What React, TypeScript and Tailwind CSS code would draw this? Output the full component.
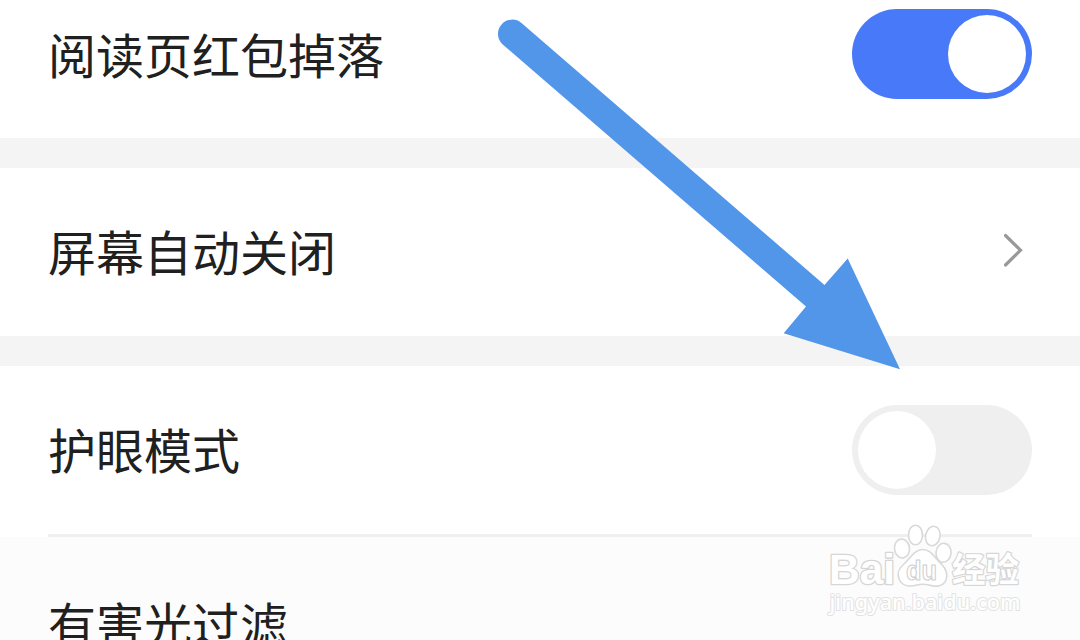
type Setting = {
  id: number;
  label: string;
  control: "on" | "off" | "link" | "none";
  className: string;
  labelClassName: string;
};

const settings: Setting[] = [
  {
    id: 1,
    label: "阅读页红包掉落",
    control: "on",
    className: "-mt-[30px] bg-white",
    labelClassName: "pb-0.5",
  },
  {
    id: 2,
    label: "屏幕自动关闭",
    control: "link",
    className: "border-t-[30px] border-[#f4f4f4] bg-white",
    labelClassName: "pb-1",
  },
  {
    id: 3,
    label: "护眼模式",
    control: "off",
    className: "border-t-[30px] border-[#f4f4f4] bg-white",
    labelClassName: "pb-1",
  },
  {
    id: 4,
    label: "有害光过滤",
    control: "none",
    className: "bg-[#fcfcfc]",
    labelClassName: "pt-0.5",
  },
];

function Toggle({ on }: { on: boolean }) {
  return (
    <div
      className={`flex h-[90px] w-[180px] items-center rounded-full px-1.5 ${
        on ? "justify-end bg-[#4879f8]" : "justify-start bg-[#efefef]"
      }`}
    >
      <div className="size-[78px] rounded-full bg-white" />
    </div>
  );
}

function Row({ setting }: { setting: Setting }) {
  return (
    <div className={`box-content flex h-[168px] shrink-0 items-center justify-between px-12 ${setting.className}`}>
      <span className={`text-5xl leading-[72px] text-[#202020] ${setting.labelClassName}`}>{setting.label}</span>
      {(setting.control === "on" || setting.control === "off") && <Toggle on={setting.control === "on"} />}
      {setting.control === "link" && (
        <svg className="mr-2 mb-1 h-9 w-5" viewBox="0 0 20 36" fill="none">
          <path d="M1.5 3.500 16.500 18.200 1.5 33" stroke="#999" strokeWidth="3.2" strokeLinecap="round" />
        </svg>
      )}
    </div>
  );
}

function Arrow() {
  return (
    <svg className="absolute inset-0" width="1080" height="640" viewBox="0 0 1080 640">
      <path
        d="M521.5 23 824.5 285 847.7 258.5 900 369.3 783.7 333.2 806 306.5 503 44.8A14.2 14.2 0 0 1 521.5 23Z"
        fill="#5296ea"
      />
    </svg>
  );
}

function Watermark() {
  return (
    <svg
      className="absolute top-[520px] left-[820px] overflow-visible"
      width="210"
      height="110"
      viewBox="0 0 210 110"
      fill="#fff"
      strokeLinejoin="round"
    >
      {/* Brand name, white with a grey rim */}
      <g stroke="#d6d6d6" style={{ paintOrder: "stroke" }}>
        <text
          x="9"
          y="63.5"
          fontSize="42"
          strokeWidth="2.6"
          className="font-['Liberation_Sans'] font-bold"
          textLength="66"
          lengthAdjust="spacingAndGlyphs"
        >
          Bai
        </text>
        <text
          x="132"
          y="61.5"
          fontSize="34"
          strokeWidth="2.4"
          className="font-['Noto_Sans_CJK_SC'] font-bold"
          textLength="67"
          lengthAdjust="spacingAndGlyphs"
        >
          经验
        </text>
      </g>

      {/* Paw */}
      <g stroke="#d9d9d9" strokeWidth="1.6">
        <ellipse cx="82" cy="28.5" rx="7.5" ry="9.5" transform="rotate(-8 82 28.5)" />
        <ellipse cx="95.5" cy="15" rx="7" ry="9.8" />
        <ellipse cx="112.8" cy="16" rx="7.2" ry="9.8" transform="rotate(12 112.8 16)" />
        <ellipse cx="123.5" cy="32.8" rx="7.5" ry="9.5" transform="rotate(6 123.5 32.8)" />
        <path d="M102.500 29.500C94 29.500 90 39 84 44C79 48 76.500 54 79.500 60C83 67 91 66.500 97 65C101 64 105 64 109 65C115 67 123 67 126 60C128.500 54 126 49 121.500 44C115 39 112 29.500 102.500 29.500Z" />
      </g>
      <text
        x="86"
        y="60"
        fontSize="27"
        stroke="#cfcfcf"
        strokeWidth="1.1"
        className="font-['Liberation_Sans'] font-bold"
        textLength="31"
        lengthAdjust="spacingAndGlyphs"
      >
        du
      </text>

      <text
        x="9.5"
        y="90"
        fontSize="21.5"
        stroke="#e3e3e3"
        strokeWidth="2"
        className="font-['Noto_Sans'] font-medium"
        style={{ paintOrder: "stroke" }}
        textLength="191"
        lengthAdjust="spacingAndGlyphs"
      >
        jingyan.baidu.com
      </text>
    </svg>
  );
}

export default function App() {
  return (
    <main className="relative flex h-screen w-full flex-col overflow-hidden bg-white font-['Noto_Sans_CJK_SC',sans-serif]">
      {settings.slice(0, 3).map((setting) => (
        <Row key={setting.id} setting={setting} />
      ))}
      <div className="mx-12 h-[3px] shrink-0 bg-[#efefef]" />
      <Row setting={settings[3]} />
      <Arrow />
      <Watermark />
    </main>
  );
}
